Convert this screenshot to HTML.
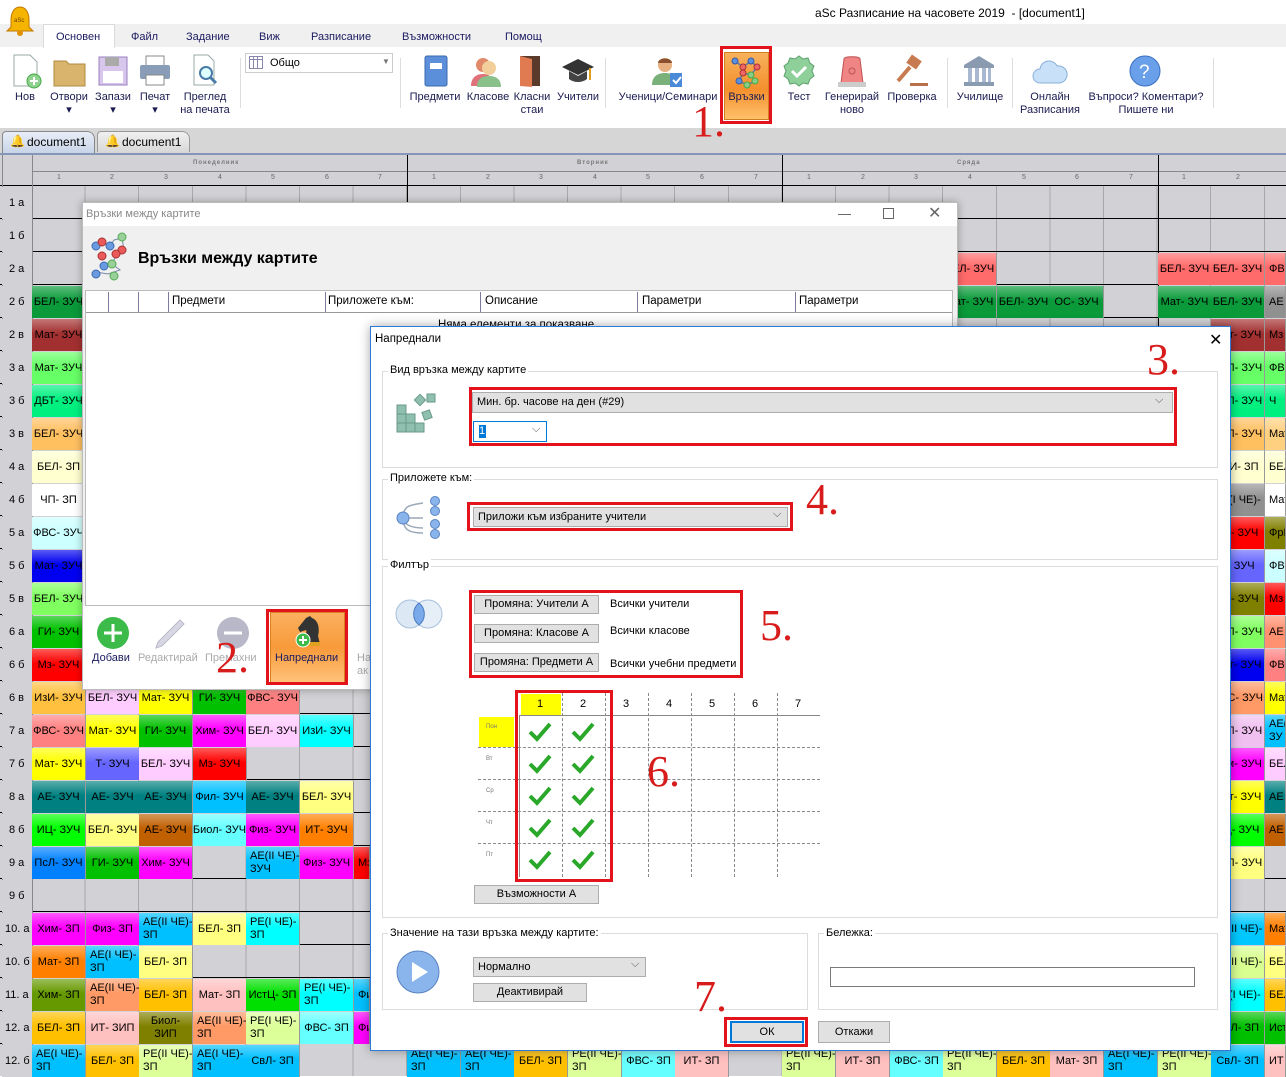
<!DOCTYPE html>
<html><head><meta charset="utf-8">
<style>
*{box-sizing:border-box;margin:0;padding:0}
body{width:1286px;height:1076px;position:relative;overflow:hidden;font-family:"Liberation Sans","Noto Sans CJK SC",sans-serif;font-size:11px;color:#000;background:#fff}
.a{position:absolute}
.rl{position:absolute;font-size:11px;color:#1a1a50;text-align:center}
.ri{position:absolute;top:53px;width:36px;height:36px}
.grid{position:absolute;left:0;top:153px;width:1286px;height:923px;background:#d2d2d6}
.c{position:absolute;width:54px;height:32px;display:flex;align-items:center;justify-content:center;font-size:11px;line-height:13px;text-align:center;background-image:linear-gradient(rgba(255,255,255,.35),rgba(255,255,255,0) 45%);border-right:1px solid #999;white-space:nowrap;overflow:hidden}
.c.l{justify-content:flex-start;padding-left:4px;text-align:left}
.lab{position:absolute;left:2px;width:30px;height:32px;font-size:11px;display:flex;align-items:center;padding-left:7px;background:#d2d2d6}
.btn{position:absolute;height:19px;background:#e1e1e1;border:1px solid #adadad;font-size:11px;text-align:center;line-height:17px}
.cb{position:absolute;height:21px;background:#e1e1e1;border:1px solid #adadad;font-size:11px;line-height:19px;padding-left:4px}
.grp{position:absolute;border:1px solid #dcdcdc}
.gt{position:absolute;background:#fff;font-size:11px;padding:0 2px}
.red{position:absolute;border:3px solid #e3131b}
.hn{position:absolute;font-family:"Liberation Serif",serif;font-size:44px;color:#d81c1c;line-height:1}
</style></head><body>

<!-- tab row -->
<div class="a" style="left:0;top:24px;width:1286px;height:23px;background:#f0f0f0"></div>
<div class="a" style="left:43px;top:24px;width:72px;height:24px;background:#fff;border:1px solid #dadada;border-bottom:none"></div>
<div class="a" style="left:56px;top:31px;font-size:11px;color:#1a1a60">Основен</div>
<div class="a" style="left:131px;top:31px;font-size:11px;color:#1a1a60">Файл</div>
<div class="a" style="left:186px;top:31px;font-size:11px;color:#1a1a60">Задание</div>
<div class="a" style="left:259px;top:31px;font-size:11px;color:#1a1a60">Виж</div>
<div class="a" style="left:311px;top:31px;font-size:11px;color:#1a1a60">Разписание</div>
<div class="a" style="left:402px;top:31px;font-size:11px;color:#1a1a60">Възможности</div>
<div class="a" style="left:505px;top:31px;font-size:11px;color:#1a1a60">Помощ</div>

<!-- title bar -->
<svg class="a" style="left:6px;top:5px" width="28" height="32" viewBox="0 0 28 32"><path d="M14 2c6 0 9 6 9 13v7l4 4H1l4-4v-7C5 8 8 2 14 2z" fill="#f5b400" stroke="#c07800"/><circle cx="14" cy="28" r="3" fill="#e09000"/><text x="8" y="17" font-size="6" fill="#704000" font-family="Liberation Sans">aSc</text></svg>
<div class="a" style="left:815px;top:6px;font-size:12px">aSc Разписание на часовете 2019&nbsp; - [document1]</div>

<!-- ribbon -->
<svg class="ri" style="left:10px"><path d="M4 2h16l7 7v24H4z" fill="#fff" stroke="#9aa"/><circle cx="24" cy="28" r="7" fill="#8fd18f" stroke="#4a4"/><path d="M24 24v8M20 28h8" stroke="#fff" stroke-width="2"/></svg>
<div class="rl" style="left:10px;top:91px;width:30px">Нов</div>
<svg class="ri" style="left:52px"><path d="M2 8h12l3 3h16v22H2z" fill="#d9b46c" stroke="#b08a40"/></svg>
<div class="rl" style="left:44px;top:91px;width:50px">Отвори<br>▾</div>
<svg class="ri" style="left:96px"><rect x="3" y="4" width="28" height="28" fill="#d8c6ec" stroke="#9a80c0"/><rect x="9" y="4" width="14" height="9" fill="#aaa"/><rect x="7" y="18" width="20" height="12" fill="#fff"/></svg>
<div class="rl" style="left:90px;top:91px;width:46px">Запази<br>▾</div>
<svg class="ri" style="left:138px"><rect x="8" y="3" width="18" height="10" fill="#fff" stroke="#888"/><rect x="2" y="12" width="30" height="14" rx="2" fill="#8a9db8"/><rect x="8" y="22" width="18" height="10" fill="#fff" stroke="#888"/></svg>
<div class="rl" style="left:135px;top:91px;width:40px">Печат<br>▾</div>
<svg class="ri" style="left:188px"><path d="M6 2h14l6 6v24H6z" fill="#fff" stroke="#9aa"/><circle cx="18" cy="20" r="6" fill="#dff" stroke="#4a7aa8" stroke-width="2"/><path d="M22 24l6 6" stroke="#4a7aa8" stroke-width="3"/></svg>
<div class="rl" style="left:175px;top:91px;width:60px;line-height:13px">Преглед<br>на печата</div>
<div class="a" style="left:240px;top:58px;width:1px;height:50px;background:#ddd"></div>
<div class="a" style="left:245px;top:53px;width:148px;height:20px;border:1px solid #ccc;background:#fff"></div>
<svg class="a" style="left:249px;top:56px" width="14" height="13"><rect x=".5" y=".5" width="13" height="12" fill="#fff" stroke="#88a"/><path d="M.5 3.5h13M4.5 1v12M8.5 1v12" stroke="#88a"/></svg>
<div class="a" style="left:270px;top:57px;font-size:11px">Общо</div>
<div class="a" style="left:382px;top:57px;font-size:8px;color:#777">▼</div>
<div class="a" style="left:400px;top:58px;width:1px;height:50px;background:#ddd"></div>
<svg class="ri" style="left:418px"><rect x="7" y="3" width="22" height="30" rx="2" fill="#5b8fd9" stroke="#3a6ab0"/><rect x="12" y="10" width="12" height="6" fill="#fff"/></svg>
<div class="rl" style="left:406px;top:91px;width:58px">Предмети</div>
<svg class="ri" style="left:469px"><circle cx="14" cy="12" r="7" fill="#e08a6a"/><path d="M2 33c0-8 5-12 12-12s10 4 10 12z" fill="#e0707a"/><circle cx="20" cy="15" r="7" fill="#f2cf9a"/><path d="M8 34c0-8 5-11 12-11s12 3 12 11z" fill="#8ac08a"/></svg>
<div class="rl" style="left:463px;top:91px;width:50px">Класове</div>
<svg class="ri" style="left:514px"><rect x="6" y="3" width="20" height="30" fill="#5a3a2a"/><path d="M6 3l12 3v28L6 33z" fill="#e07a50"/></svg>
<div class="rl" style="left:510px;top:91px;width:44px;line-height:13px">Класни<br>стаи</div>
<svg class="ri" style="left:560px"><path d="M2 14l16-8 16 8-16 8z" fill="#333"/><path d="M9 18v8c5 4 13 4 18 0v-8l-9 5z" fill="#444"/><path d="M30 15v12" stroke="#e0a020" stroke-width="2"/></svg>
<div class="rl" style="left:553px;top:91px;width:50px">Учители</div>
<div class="a" style="left:605px;top:58px;width:1px;height:50px;background:#ddd"></div>
<svg class="ri" style="left:650px"><circle cx="15" cy="12" r="7" fill="#e8b080"/><path d="M8 10c0-6 14-6 14 0" fill="#8a5030"/><path d="M2 32c0-8 5-12 13-12s11 4 11 12z" fill="#7ab07a"/><rect x="20" y="20" width="12" height="14" fill="#4a8ad8"/><path d="M23 27l3 3 5-6" stroke="#fff" fill="none" stroke-width="2"/></svg>
<div class="rl" style="left:614px;top:91px;width:108px">Ученици/Семинари</div>
<div class="a" style="left:724px;top:52px;width:45px;height:68px;background:linear-gradient(#f7b25b,#f58f2e 55%,#ffc06a);border:1px solid #d08020"></div>
<svg class="a" style="left:729px;top:55px" width="36" height="34"><path d="M6 6L14 12L22 6L28 12L22 20L14 18L10 26L18 30L26 26" stroke="#5a7aa8" stroke-width="1.5" fill="none"/><g fill="#5b8fe0" stroke="#3a5aa0"><circle cx="6" cy="6" r="3"/><circle cx="22" cy="6" r="3"/><circle cx="10" cy="26" r="3"/></g><g fill="#e66" stroke="#a33"><circle cx="14" cy="12" r="3"/><circle cx="28" cy="12" r="3"/><circle cx="14" cy="18" r="3"/></g><g fill="#8c8" stroke="#4a4"><circle cx="22" cy="20" r="3"/><circle cx="18" cy="30" r="3"/><circle cx="26" cy="26" r="3"/></g></svg>
<div class="rl" style="left:724px;top:91px;width:45px">Връзки</div>
<div class="red" style="left:720px;top:46px;width:52px;height:78px"></div>
<svg class="ri" style="left:781px"><path d="M18 3l4 3 5-1 2 5 4 3-2 5 2 5-4 3-2 5-5-1-4 3-4-3-5 1-2-5-4-3 2-5-2-5 4-3 2-5 5 1z" fill="#8fcf9a" stroke="#5aa06a"/><path d="M11 18l5 5 9-9" stroke="#fff" stroke-width="3" fill="none"/></svg>
<div class="rl" style="left:780px;top:91px;width:38px">Тест</div>
<svg class="ri" style="left:834px"><path d="M10 6c0-3 16-3 16 0l3 24H7z" fill="#ef8585" stroke="#c05050"/><rect x="4" y="29" width="28" height="5" fill="#ccc"/><circle cx="18" cy="18" r="3" fill="none" stroke="#c05050"/></svg>
<div class="rl" style="left:821px;top:91px;width:62px;line-height:13px">Генерирай<br>ново</div>
<svg class="ri" style="left:894px"><rect x="14" y="4" width="12" height="10" fill="#c87a50" transform="rotate(35 20 9)"/><path d="M16 14L4 28" stroke="#c87a50" stroke-width="4"/><rect x="16" y="30" width="18" height="3" fill="#b8704a"/></svg>
<div class="rl" style="left:884px;top:91px;width:56px">Проверка</div>
<div class="a" style="left:947px;top:58px;width:1px;height:50px;background:#ddd"></div>
<svg class="ri" style="left:961px"><path d="M3 12L18 3l15 9z" fill="#8a9ab0"/><rect x="3" y="12" width="30" height="3" fill="#8a9ab0"/><g fill="#a8b8d0"><rect x="7" y="15" width="4" height="14"/><rect x="14" y="15" width="4" height="14"/><rect x="21" y="15" width="4" height="14"/><rect x="27" y="15" width="3" height="14"/></g><rect x="3" y="29" width="30" height="4" fill="#8a9ab0"/></svg>
<div class="rl" style="left:950px;top:91px;width:60px">Училище</div>
<div class="a" style="left:1012px;top:58px;width:1px;height:50px;background:#ddd"></div>
<svg class="ri" style="left:1032px"><path d="M8 30a7 7 0 010-14 9 9 0 0117-3 8 8 0 013 17z" fill="#c8e0f8" stroke="#8ab0d8"/></svg>
<div class="rl" style="left:1012px;top:91px;width:76px;line-height:13px">Онлайн<br>Разписания</div>
<svg class="ri" style="left:1127px"><circle cx="18" cy="18" r="15" fill="#6aa0ea" stroke="#3a70c0"/><text x="12" y="25" font-size="19" fill="#fff" font-family="Liberation Sans">?</text></svg>
<div class="rl" style="left:1080px;top:91px;width:132px;line-height:13px">Въпроси? Коментари?<br>Пишете ни</div>
<div class="a" style="left:1213px;top:58px;width:1px;height:50px;background:#ddd"></div>

<!-- doc tabs -->
<div class="a" style="left:0;top:128px;width:1286px;height:25px;background:#d6d6d6"></div>
<div class="a" style="left:2px;top:131px;width:93px;height:22px;background:linear-gradient(#e8eef8,#c8d4e8);border:1px solid #888;border-bottom:none;border-radius:4px 8px 0 0"></div>
<div class="a" style="left:97px;top:131px;width:93px;height:21px;background:linear-gradient(#f0f0f0,#d8d8d8);border:1px solid #999;border-bottom:none;border-radius:4px 8px 0 0"></div>
<div class="a" style="left:10px;top:134px;font-size:12px">🔔</div>
<div class="a" style="left:27px;top:135px;font-size:12px">document1</div>
<div class="a" style="left:105px;top:134px;font-size:12px">🔔</div>
<div class="a" style="left:122px;top:135px;font-size:12px">document1</div>

<!-- grid -->
<div class="grid">
 <div class="a" style="left:0;top:0;width:1286px;height:2px;background:#8596b8"></div>
 <div class="a" style="left:32px;top:33px;width:1254px;height:890px;background-image:repeating-linear-gradient(90deg,transparent 0 52.6px,#a8a8a8 52.6px 53.6px)"></div>
 <div class="a" style="left:0;top:32px;width:1286px;height:891px;background-image:repeating-linear-gradient(180deg,#000 0 1px,transparent 1px 33px)"></div>
 <div class="a" style="left:32px;top:18px;width:1254px;height:1px;background:#888"></div>
 <div class="a" style="left:2px;top:2px;width:1px;height:921px;background:#888"></div>
 <div class="a" style="left:32px;top:2px;width:1px;height:921px;background:#888"></div>
 <div class="a" style="left:407px;top:2px;width:1px;height:921px;background:#000"></div>
 <div class="a" style="left:782px;top:2px;width:1px;height:921px;background:#000"></div>
 <div class="a" style="left:1158px;top:2px;width:1px;height:921px;background:#000"></div>
 <div class="a" style="left:193px;top:7px;font-size:6px;font-weight:bold;color:#777;letter-spacing:1px">Понеделник</div>
 <div class="a" style="left:577px;top:7px;font-size:6px;font-weight:bold;color:#777;letter-spacing:1px">Вторник</div>
 <div class="a" style="left:957px;top:7px;font-size:6px;font-weight:bold;color:#777;letter-spacing:1px">Сряда</div>
 <div class="a" style="left:32px;top:21px;width:1254px;font-size:7px;color:#666;white-space:nowrap">
  <span style="position:absolute;left:25px">1</span><span style="position:absolute;left:78px">2</span><span style="position:absolute;left:132px">3</span><span style="position:absolute;left:186px">4</span><span style="position:absolute;left:239px">5</span><span style="position:absolute;left:293px">6</span><span style="position:absolute;left:346px">7</span>
  <span style="position:absolute;left:400px">1</span><span style="position:absolute;left:454px">2</span><span style="position:absolute;left:507px">3</span><span style="position:absolute;left:561px">4</span><span style="position:absolute;left:614px">5</span><span style="position:absolute;left:668px">6</span><span style="position:absolute;left:722px">7</span>
  <span style="position:absolute;left:775px">1</span><span style="position:absolute;left:829px">2</span><span style="position:absolute;left:882px">3</span><span style="position:absolute;left:936px">4</span><span style="position:absolute;left:990px">5</span><span style="position:absolute;left:1043px">6</span><span style="position:absolute;left:1097px">7</span>
  <span style="position:absolute;left:1150px">1</span><span style="position:absolute;left:1204px">2</span>
 </div>
</div>

<!-- row labels -->
<div class="lab" style="top:187px">1 а</div><div class="lab" style="top:220px">1 б</div><div class="lab" style="top:253px">2 а</div><div class="lab" style="top:286px">2 б</div><div class="lab" style="top:319px">2 в</div><div class="lab" style="top:352px">3 а</div><div class="lab" style="top:385px">3 б</div><div class="lab" style="top:418px">3 в</div><div class="lab" style="top:451px">4 а</div><div class="lab" style="top:484px">4 б</div><div class="lab" style="top:517px">5 а</div><div class="lab" style="top:550px">5 б</div><div class="lab" style="top:583px">5 в</div><div class="lab" style="top:616px">6 а</div><div class="lab" style="top:649px">6 б</div><div class="lab" style="top:682px">6 в</div><div class="lab" style="top:715px">7 а</div><div class="lab" style="top:748px">7 б</div><div class="lab" style="top:781px">8 а</div><div class="lab" style="top:814px">8 б</div><div class="lab" style="top:847px">9 а</div><div class="lab" style="top:880px">9 б</div><div class="lab" style="top:913px;padding-left:3px">10. а</div><div class="lab" style="top:946px;padding-left:3px">10. б</div><div class="lab" style="top:979px;padding-left:3px">11. а</div><div class="lab" style="top:1012px;padding-left:3px">12. а</div><div class="lab" style="top:1045px;padding-left:3px">12. б</div>

<div class="c" style="left:32px;top:286px;background-color:#0a9a3a">БЕЛ- ЗУЧ</div>
<div class="c" style="left:32px;top:319px;background-color:#a33030">Мат- ЗУЧ</div>
<div class="c" style="left:32px;top:352px;background-color:#66ff66">Мат- ЗУЧ</div>
<div class="c" style="left:32px;top:385px;background-color:#00f080">ДБТ- ЗУЧ</div>
<div class="c" style="left:32px;top:418px;background-color:#ffc060">БЕЛ- ЗУЧ</div>
<div class="c" style="left:32px;top:451px;background-color:#ffffd0">БЕЛ- ЗП</div>
<div class="c" style="left:32px;top:484px;background-color:#ffffff">ЧП- ЗП</div>
<div class="c" style="left:32px;top:517px;background-color:#ccffff">ФВС- ЗУЧ</div>
<div class="c" style="left:32px;top:550px;background-color:#0000f0">Мат- ЗУЧ</div>
<div class="c" style="left:32px;top:583px;background-color:#80ff60">БЕЛ- ЗУЧ</div>
<div class="c" style="left:32px;top:616px;background-color:#00c000">ГИ- ЗУЧ</div>
<div class="c" style="left:32px;top:649px;background-color:#ff0000">Мз- ЗУЧ</div>

<div class="c" style="left:32px;top:682px;background-color:#ffc040">ИзИ- ЗУЧ</div>
<div class="c" style="left:86px;top:682px;background-color:#ffccff">БЕЛ- ЗУЧ</div>
<div class="c" style="left:139px;top:682px;background-color:#ffff00">Мат- ЗУЧ</div>
<div class="c" style="left:193px;top:682px;background-color:#00c000">ГИ- ЗУЧ</div>
<div class="c" style="left:246px;top:682px;background-color:#ff8080">ФВС- ЗУЧ</div>
<div class="c" style="left:32px;top:715px;background-color:#ff8080">ФВС- ЗУЧ</div>
<div class="c" style="left:86px;top:715px;background-color:#ffff00">Мат- ЗУЧ</div>
<div class="c" style="left:139px;top:715px;background-color:#00c000">ГИ- ЗУЧ</div>
<div class="c" style="left:193px;top:715px;background-color:#ff00ff">Хим- ЗУЧ</div>
<div class="c" style="left:246px;top:715px;background-color:#ffccff">БЕЛ- ЗУЧ</div>
<div class="c" style="left:300px;top:715px;background-color:#00ffff">ИзИ- ЗУЧ</div>
<div class="c" style="left:32px;top:748px;background-color:#ffff00">Мат- ЗУЧ</div>
<div class="c" style="left:86px;top:748px;background-color:#6666ff">Т- ЗУЧ</div>
<div class="c" style="left:139px;top:748px;background-color:#ffccff">БЕЛ- ЗУЧ</div>
<div class="c" style="left:193px;top:748px;background-color:#ff0000">Мз- ЗУЧ</div>
<div class="c" style="left:32px;top:781px;background-color:#008080">АЕ- ЗУЧ</div>
<div class="c" style="left:86px;top:781px;background-color:#008080">АЕ- ЗУЧ</div>
<div class="c" style="left:139px;top:781px;background-color:#008080">АЕ- ЗУЧ</div>
<div class="c" style="left:193px;top:781px;background-color:#00c0ff">Фил- ЗУЧ</div>
<div class="c" style="left:246px;top:781px;background-color:#008080">АЕ- ЗУЧ</div>
<div class="c" style="left:300px;top:781px;background-color:#ffff80">БЕЛ- ЗУЧ</div>
<div class="c" style="left:32px;top:814px;background-color:#00ff00">ИЦ- ЗУЧ</div>
<div class="c" style="left:86px;top:814px;background-color:#ffff80">БЕЛ- ЗУЧ</div>
<div class="c" style="left:139px;top:814px;background-color:#c06000">АЕ- ЗУЧ</div>
<div class="c" style="left:193px;top:814px;background-color:#66ffff">Биол- ЗУЧ</div>
<div class="c" style="left:246px;top:814px;background-color:#ff00ff">Физ- ЗУЧ</div>
<div class="c" style="left:300px;top:814px;background-color:#ff8000">ИТ- ЗУЧ</div>
<div class="c" style="left:32px;top:847px;background-color:#0080ff">ПсЛ- ЗУЧ</div>
<div class="c" style="left:86px;top:847px;background-color:#00c000">ГИ- ЗУЧ</div>
<div class="c" style="left:139px;top:847px;background-color:#ff00ff">Хим- ЗУЧ</div>
<div class="c l" style="left:246px;top:847px;background-color:#00c0ff">АЕ(II ЧЕ)-<br>ЗУЧ</div>
<div class="c" style="left:300px;top:847px;background-color:#ff00ff">Физ- ЗУЧ</div>
<div class="c l" style="left:354px;top:847px;width:16px;background-color:#ff0000">Мз</div>
<div class="c" style="left:32px;top:913px;background-color:#ff00ff">Хим- ЗП</div>
<div class="c" style="left:86px;top:913px;background-color:#ff00ff">Физ- ЗП</div>
<div class="c l" style="left:139px;top:913px;background-color:#00c0ff">АЕ(II ЧЕ)-<br>ЗП</div>
<div class="c" style="left:193px;top:913px;background-color:#ffff80">БЕЛ- ЗП</div>
<div class="c l" style="left:246px;top:913px;background-color:#00ffff">РЕ(I ЧЕ)-<br>ЗП</div>
<div class="c" style="left:32px;top:946px;background-color:#ff8000">Мат- ЗП</div>
<div class="c l" style="left:86px;top:946px;background-color:#00c0ff">АЕ(I ЧЕ)-<br>ЗП</div>
<div class="c" style="left:139px;top:946px;background-color:#ffff80">БЕЛ- ЗП</div>
<div class="c" style="left:32px;top:979px;background-color:#669900">Хим- ЗП</div>
<div class="c l" style="left:86px;top:979px;background-color:#ff9966">АЕ(II ЧЕ)-<br>ЗП</div>
<div class="c" style="left:139px;top:979px;background-color:#ffc000">БЕЛ- ЗП</div>
<div class="c" style="left:193px;top:979px;background-color:#ffc0c0">Мат- ЗП</div>
<div class="c" style="left:246px;top:979px;background-color:#00e000">ИстЦ- ЗП</div>
<div class="c l" style="left:300px;top:979px;background-color:#00ffff">РЕ(I ЧЕ)-<br>ЗП</div>
<div class="c l" style="left:354px;top:979px;width:16px;background-color:#00c0ff">Фи</div>
<div class="c" style="left:32px;top:1012px;background-color:#ffc000">БЕЛ- ЗП</div>
<div class="c" style="left:86px;top:1012px;background-color:#ffc0c0">ИТ- ЗИП</div>
<div class="c" style="left:139px;top:1012px;background-color:#808000">Биол-<br>ЗИП</div>
<div class="c l" style="left:193px;top:1012px;background-color:#ff9966">АЕ(II ЧЕ)-<br>ЗП</div>
<div class="c l" style="left:246px;top:1012px;background-color:#ddff99">РЕ(I ЧЕ)-<br>ЗП</div>
<div class="c" style="left:300px;top:1012px;background-color:#66ffff">ФВС- ЗП</div>
<div class="c l" style="left:354px;top:1012px;width:16px;background-color:#ff00ff">Фи</div>
<div class="c l" style="left:32px;top:1045px;background-color:#00c0ff">АЕ(I ЧЕ)-<br>ЗП</div>
<div class="c" style="left:86px;top:1045px;background-color:#ffc000">БЕЛ- ЗП</div>
<div class="c l" style="left:139px;top:1045px;background-color:#ddff99">РЕ(II ЧЕ)-<br>ЗП</div>
<div class="c l" style="left:193px;top:1045px;background-color:#00c0ff">АЕ(I ЧЕ)-<br>ЗП</div>
<div class="c" style="left:246px;top:1045px;background-color:#00c0ff">СвЛ- ЗП</div>
<div class="c l" style="left:407px;top:1045px;background-color:#00c0ff">АЕ(I ЧЕ)-<br>ЗП</div>
<div class="c l" style="left:461px;top:1045px;background-color:#00c0ff">АЕ(I ЧЕ)-<br>ЗП</div>
<div class="c" style="left:514px;top:1045px;background-color:#ffc000">БЕЛ- ЗП</div>
<div class="c l" style="left:568px;top:1045px;background-color:#ddff99">РЕ(II ЧЕ)-<br>ЗП</div>
<div class="c" style="left:622px;top:1045px;background-color:#66ffff">ФВС- ЗП</div>
<div class="c" style="left:675px;top:1045px;background-color:#ffc0c0">ИТ- ЗП</div>
<div class="c l" style="left:782px;top:1045px;background-color:#ddff99">РЕ(II ЧЕ)-<br>ЗП</div>
<div class="c" style="left:836px;top:1045px;background-color:#ffc0c0">ИТ- ЗП</div>
<div class="c" style="left:890px;top:1045px;background-color:#66ffff">ФВС- ЗП</div>
<div class="c l" style="left:943px;top:1045px;background-color:#ddff99">РЕ(II ЧЕ)-<br>ЗП</div>
<div class="c" style="left:997px;top:1045px;background-color:#ffc000">БЕЛ- ЗП</div>
<div class="c" style="left:1050px;top:1045px;background-color:#ffc0c0">Мат- ЗП</div>
<div class="c l" style="left:1104px;top:1045px;background-color:#00c0ff">АЕ(I ЧЕ)-<br>ЗП</div>
<div class="c l" style="left:1158px;top:1045px;background-color:#ddff99">РЕ(II ЧЕ)-<br>ЗП</div>
<div class="c" style="left:1211px;top:1045px;background-color:#00c0ff">СвЛ- ЗП</div>
<div class="c l" style="left:1265px;top:1045px;width:21px;background-color:#ffc0c0">ИТ</div>

<div class="c" style="left:943px;top:253px;background-color:#ff6a6a">БЕЛ- ЗУЧ</div>
<div class="c" style="left:1158px;top:253px;background-color:#ff6a6a">БЕЛ- ЗУЧ</div>
<div class="c" style="left:1211px;top:253px;background-color:#ff6a6a">БЕЛ- ЗУЧ</div>
<div class="c l" style="left:1265px;top:253px;width:21px;background-color:#ff6a6a">ФВС</div>
<div class="c" style="left:943px;top:286px;background-color:#0a9a3a">Мат- ЗУЧ</div>
<div class="c" style="left:997px;top:286px;background-color:#0a9a3a">БЕЛ- ЗУЧ</div>
<div class="c" style="left:1050px;top:286px;background-color:#0a9a3a">ОС- ЗУЧ</div>
<div class="c" style="left:1158px;top:286px;background-color:#0a9a3a">Мат- ЗУЧ</div>
<div class="c" style="left:1211px;top:286px;background-color:#0a9a3a">БЕЛ- ЗУЧ</div>
<div class="c l" style="left:1265px;top:286px;width:21px;background-color:#909090">АЕ</div>
<div class="c" style="left:1211px;top:319px;background-color:#a33030">Мат- ЗУЧ</div><div class="c l" style="left:1265px;top:319px;width:21px;background-color:#a33030">Мз</div>
<div class="c" style="left:1211px;top:352px;background-color:#66ff66">БЕЛ- ЗУЧ</div><div class="c l" style="left:1265px;top:352px;width:21px;background-color:#66ff66">ФВС</div>
<div class="c" style="left:1211px;top:385px;background-color:#00f080">БЕЛ- ЗУЧ</div><div class="c l" style="left:1265px;top:385px;width:21px;background-color:#00f080">Ч</div>
<div class="c" style="left:1211px;top:418px;background-color:#ffc060">БЕЛ- ЗУЧ</div><div class="c l" style="left:1265px;top:418px;width:21px;background-color:#ffd080">Мат</div>
<div class="c" style="left:1211px;top:451px;background-color:#ffffd0">ИзИ- ЗП</div><div class="c l" style="left:1265px;top:451px;width:21px;background-color:#ffffd0">БЕЛ</div>
<div class="c" style="left:1211px;top:484px;background-color:#909090">АЕ(I ЧЕ)-</div><div class="c l" style="left:1265px;top:484px;width:21px;background-color:#fff">Мат</div>
<div class="c" style="left:1211px;top:517px;background-color:#ff0000">Мз- ЗУЧ</div><div class="c l" style="left:1265px;top:517px;width:21px;background-color:#808000">ФрЕ</div>
<div class="c" style="left:1211px;top:550px;background-color:#6666ff">Т- ЗУЧ</div><div class="c l" style="left:1265px;top:550px;width:21px;background-color:#ccffff">ФВС</div>
<div class="c" style="left:1211px;top:583px;background-color:#808000">АЕ- ЗУЧ</div><div class="c l" style="left:1265px;top:583px;width:21px;background-color:#ff0000">Мз</div>
<div class="c" style="left:1211px;top:616px;background-color:#80ff60">БЕЛ- ЗУЧ</div><div class="c l" style="left:1265px;top:616px;width:21px;background-color:#ff9070">АЕ</div>
<div class="c" style="left:1211px;top:649px;background-color:#0000f0">Мат- ЗУЧ</div><div class="c l" style="left:1265px;top:649px;width:21px;background-color:#ff8080">ФВС</div>
<div class="c" style="left:1211px;top:682px;background-color:#ff9966">ФВС- ЗУЧ</div><div class="c l" style="left:1265px;top:682px;width:21px;background-color:#ffff00">Мат</div>
<div class="c" style="left:1211px;top:715px;background-color:#f0c0f0">БЕЛ- ЗУЧ</div><div class="c l" style="left:1265px;top:715px;width:21px;background-color:#00c0ff">АЕ(<br>ЗУ</div>
<div class="c" style="left:1211px;top:748px;background-color:#ff00ff">Хим- ЗУЧ</div><div class="c l" style="left:1265px;top:748px;width:21px;background-color:#ffccff">БЕЛ</div>
<div class="c" style="left:1211px;top:781px;background-color:#ffff00">Мат- ЗУЧ</div><div class="c l" style="left:1265px;top:781px;width:21px;background-color:#008080">АЕ</div>
<div class="c" style="left:1211px;top:814px;background-color:#00ff00">ИЦ- ЗУЧ</div><div class="c l" style="left:1265px;top:814px;width:21px;background-color:#c06000">АЕ</div>
<div class="c" style="left:1211px;top:847px;background-color:#ffff80">БЕЛ- ЗУЧ</div>
<div class="c" style="left:1211px;top:913px;background-color:#00c8ff">АЕ(II ЧЕ)-</div><div class="c l" style="left:1265px;top:913px;width:21px;background-color:#ff8000">Мат</div>
<div class="c" style="left:1211px;top:946px;background-color:#d8ff90">РЕ(II ЧЕ)-</div><div class="c l" style="left:1265px;top:946px;width:21px;background-color:#ffff80">БЕЛ</div>
<div class="c" style="left:1211px;top:979px;background-color:#00ffff">РЕ(I ЧЕ)-</div><div class="c l" style="left:1265px;top:979px;width:21px;background-color:#ffc000">БЕЛ</div>
<div class="c" style="left:1211px;top:1012px;background-color:#00c000">БЕЛ- ЗП</div><div class="c l" style="left:1265px;top:1012px;width:21px;background-color:#00c000">Ист</div>

<!-- Dialog 1 -->
<div class="a" style="left:82px;top:202px;width:876px;height:488px;background:#fff;border:1px solid #bbb;box-shadow:0 0 8px rgba(0,0,0,.3)"></div>
<div class="a" style="left:86px;top:208px;font-size:11px;color:#888">Връзки между картите</div>
<div class="a" style="left:838px;top:206px;font-size:13px;color:#555">—</div>
<div class="a" style="left:883px;top:208px;width:11px;height:11px;border:1px solid #666"></div>
<div class="a" style="left:928px;top:203px;font-size:16px;color:#666">✕</div>
<div class="a" style="left:83px;top:226px;width:874px;height:380px;background:#f0f0f0"></div>
<svg class="a" style="left:86px;top:230px" width="48" height="52"><path d="M10 16L16 12L24 16L28 10L36 8L38 20L30 26L26 34L34 40L22 44L10 42" stroke="#7a8aa8" fill="none"/><g fill="#6a9ae0" stroke="#3a6ab0"><circle cx="10" cy="16" r="4"/><circle cx="24" cy="16" r="4"/><circle cx="18" cy="36" r="4"/><circle cx="10" cy="44" r="4"/></g><g fill="#ea5a5a" stroke="#a33"><circle cx="16" cy="12" r="4"/><circle cx="36" cy="20" r="4"/><circle cx="16" cy="26" r="4"/><circle cx="30" cy="24" r="4"/></g><g fill="#9ad09a" stroke="#5a5"><circle cx="36" cy="7" r="4"/><circle cx="26" cy="34" r="4"/><circle cx="28" cy="46" r="4"/></g></svg>
<div class="a" style="left:138px;top:250px;font-size:16px;font-weight:bold">Връзки между картите</div>
<div class="a" style="left:85px;top:290px;width:868px;height:316px;background:#fff;border:1px solid #bbb"></div>
<div class="a" style="left:86px;top:291px;width:866px;height:22px;border-bottom:1px solid #999;background:#fff"></div>
<div class="a" style="left:108px;top:292px;width:1px;height:20px;background:#7a7aa0"></div>
<div class="a" style="left:138px;top:292px;width:1px;height:20px;background:#7a7aa0"></div>
<div class="a" style="left:168px;top:292px;width:1px;height:20px;background:#7a7aa0"></div>
<div class="a" style="left:325px;top:292px;width:1px;height:20px;background:#7a7aa0"></div>
<div class="a" style="left:480px;top:292px;width:1px;height:20px;background:#7a7aa0"></div>
<div class="a" style="left:637px;top:292px;width:1px;height:20px;background:#7a7aa0"></div>
<div class="a" style="left:795px;top:292px;width:1px;height:20px;background:#7a7aa0"></div>
<div class="a" style="left:172px;top:295px;font-size:11.5px">Предмети</div>
<div class="a" style="left:328px;top:295px;font-size:11.5px">Приложете към:</div>
<div class="a" style="left:485px;top:295px;font-size:11.5px">Описание</div>
<div class="a" style="left:642px;top:295px;font-size:11.5px">Параметри</div>
<div class="a" style="left:799px;top:295px;font-size:11.5px">Параметри</div>
<div class="a" style="left:438px;top:319px;font-size:11.5px">Няма елементи за показване</div>
<div class="a" style="left:83px;top:606px;width:874px;height:83px;background:#fff"></div>
<svg class="a" style="left:96px;top:616px" width="34" height="34"><circle cx="17" cy="17" r="16" fill="#3cba4a"/><path d="M17 8v18M8 17h18" stroke="#fff" stroke-width="3"/></svg>
<div class="a" style="left:92px;top:652px;font-size:11px;color:#1a1a60">Добави</div>
<svg class="a" style="left:152px;top:616px" width="34" height="34"><path d="M28 4l4 4L10 30l-6 2 2-6z" fill="#d8d8e4" stroke="#b8b8c8"/></svg>
<div class="a" style="left:138px;top:652px;font-size:11px;color:#aaa">Редактирай</div>
<svg class="a" style="left:216px;top:616px" width="34" height="34"><circle cx="17" cy="17" r="16" fill="#b8b8c8"/><path d="M8 17h18" stroke="#fff" stroke-width="3"/></svg>
<div class="a" style="left:205px;top:652px;font-size:11px;color:#aaa">Премахни</div>
<div class="a" style="left:270px;top:612px;width:75px;height:71px;background:linear-gradient(#fbb060,#f89a3a 50%,#ffc27a);border:1px solid #d88020"></div>
<svg class="a" style="left:294px;top:614px" width="30" height="34"><path d="M8 30c0-8 6-10 4-14l-6 2-2-4 8-10 4-2 2 2c6 2 8 10 6 18l2 8z" fill="#333"/><rect x="6" y="28" width="20" height="4" fill="#e0a020"/><circle cx="9" cy="26" r="7" fill="#3cba4a" stroke="#fff"/><path d="M9 22v8M5 26h8" stroke="#fff" stroke-width="2"/></svg>
<div class="a" style="left:275px;top:652px;font-size:11px;color:#1a1a60">Напреднали</div>
<div class="red" style="left:266px;top:609px;width:82px;height:76px"></div>
<div class="a" style="left:357px;top:652px;font-size:11px;color:#aaa;line-height:13px">На<br>ак</div>
<div class="hn" style="left:216px;top:636px">2.</div>

<!-- Dialog 2 -->
<div class="a" style="left:370px;top:326px;width:861px;height:725px;background:#fff;border:1px solid #2b79d8;box-shadow:0 0 10px rgba(0,0,0,.35)"></div>
<div class="a" style="left:375px;top:333px;font-size:11.5px">Напреднали</div>
<div class="a" style="left:1209px;top:330px;font-size:16px">✕</div>
<div class="grp" style="left:382px;top:371px;width:836px;height:97px"></div>
<div class="gt" style="left:388px;top:364px">Вид връзка между картите</div>
<svg class="a" style="left:396px;top:391px" width="46" height="46"><g fill="#8fbfaf" stroke="#6a9a8a"><rect x="1" y="14" width="9" height="9"/><rect x="1" y="23" width="9" height="9"/><rect x="10" y="23" width="9" height="9"/><rect x="1" y="32" width="9" height="9"/><rect x="10" y="32" width="9" height="9"/><rect x="19" y="32" width="9" height="9"/><rect x="31" y="3" width="8" height="8"/><rect x="20" y="5" width="8" height="8" transform="rotate(45 24 9)"/><rect x="27" y="20" width="8" height="8" transform="rotate(-20 31 24)"/></g></svg>
<div class="cb" style="left:472px;top:392px;width:701px">Мин. бр. часове на ден (#29)</div>
<div class="a" style="left:1155px;top:394px;font-size:11px;color:#555">⌵</div>
<div class="a" style="left:473px;top:421px;width:74px;height:21px;border:1px solid #0078d7;background:#fff"></div>
<div class="a" style="left:479px;top:425px;width:7px;height:13px;background:#0078d7;color:#fff;font-size:11px;line-height:13px">1</div>
<div class="a" style="left:532px;top:423px;font-size:11px;color:#555">⌵</div>
<div class="red" style="left:469px;top:387px;width:708px;height:59px"></div>
<div class="hn" style="left:1147px;top:338px">3.</div>

<div class="grp" style="left:382px;top:479px;width:836px;height:81px"></div>
<div class="gt" style="left:388px;top:472px">Приложете към:</div>
<svg class="a" style="left:395px;top:495px" width="48" height="46"><path d="M8 23C8 10 16 10 28 8M8 23h20M8 23c0 6 8 10 20 10M8 23c0 13 8 15 20 15" stroke="#9aa8b8" fill="none" stroke-width="1.5"/><g fill="#8ab4ec" stroke="#5a84c0"><circle cx="8" cy="23" r="6"/><circle cx="40" cy="6" r="4.5"/><circle cx="40" cy="16" r="4.5"/><circle cx="40" cy="29" r="4.5"/><circle cx="40" cy="39" r="4.5"/></g></svg>
<div class="cb" style="left:473px;top:507px;width:315px;height:20px;line-height:18px">Приложи към избраните учители</div>
<div class="a" style="left:773px;top:508px;font-size:11px;color:#555">⌵</div>
<div class="red" style="left:467px;top:502px;width:326px;height:29px"></div>
<div class="hn" style="left:806px;top:478px">4.</div>

<div class="grp" style="left:382px;top:566px;width:836px;height:352px"></div>
<div class="gt" style="left:388px;top:559px">Филтър</div>
<svg class="a" style="left:394px;top:597px" width="52" height="34"><circle cx="16" cy="17" r="14" fill="#dce8f4" stroke="#a8c0dc"/><circle cx="34" cy="17" r="14" fill="#dce8f4" stroke="#a8c0dc" fill-opacity=".7"/><path d="M25 6a14 14 0 010 22a14 14 0 010-22z" fill="#7aaaea" stroke="#4a7ac0"/></svg>
<div class="btn" style="left:474px;top:595px;width:125px">Промяна: Учители А</div>
<div class="btn" style="left:474px;top:624px;width:125px">Промяна: Класове А</div>
<div class="btn" style="left:474px;top:653px;width:125px">Промяна: Предмети А</div>
<div class="a" style="left:610px;top:598px;font-size:11px">Всички учители</div>
<div class="a" style="left:610px;top:625px;font-size:11px">Всички класове</div>
<div class="a" style="left:610px;top:658px;font-size:11px">Всички учебни предмети</div>
<div class="red" style="left:469px;top:590px;width:274px;height:88px"></div>
<div class="hn" style="left:760px;top:604px">5.</div>

<div class="a" style="left:521px;top:694px;width:40px;height:21px;background:#ffff00"></div>
<div class="a" style="left:479px;top:717px;width:35px;height:30px;background:#ffff00"></div>
<div class="a" style="left:519px;top:715px;width:301px;height:1px;background:#888"></div>
<div class="a" style="left:519px;top:715px;width:1px;height:162px;background:#888"></div>
<div class="a" style="left:562px;top:693px;width:0;height:184px;border-left:1px dashed #888"></div>
<div class="a" style="left:605px;top:693px;width:0;height:184px;border-left:1px dashed #888"></div>
<div class="a" style="left:648px;top:693px;width:0;height:184px;border-left:1px dashed #888"></div>
<div class="a" style="left:691px;top:693px;width:0;height:184px;border-left:1px dashed #888"></div>
<div class="a" style="left:734px;top:693px;width:0;height:184px;border-left:1px dashed #888"></div>
<div class="a" style="left:777px;top:693px;width:0;height:184px;border-left:1px dashed #888"></div>
<div class="a" style="left:478px;top:747px;width:342px;height:0;border-top:1px dashed #888"></div>
<div class="a" style="left:478px;top:779px;width:342px;height:0;border-top:1px dashed #888"></div>
<div class="a" style="left:478px;top:811px;width:342px;height:0;border-top:1px dashed #888"></div>
<div class="a" style="left:478px;top:843px;width:342px;height:0;border-top:1px dashed #888"></div>
<div class="a" style="left:537px;top:698px;font-size:11px">1</div>
<div class="a" style="left:580px;top:698px;font-size:11px">2</div>
<div class="a" style="left:623px;top:698px;font-size:11px">3</div>
<div class="a" style="left:666px;top:698px;font-size:11px">4</div>
<div class="a" style="left:709px;top:698px;font-size:11px">5</div>
<div class="a" style="left:752px;top:698px;font-size:11px">6</div>
<div class="a" style="left:795px;top:698px;font-size:11px">7</div>
<div class="a" style="left:486px;top:724px;font-size:6px;color:#777">Пон</div>
<div class="a" style="left:486px;top:756px;font-size:6px;color:#777">Вт</div>
<div class="a" style="left:486px;top:788px;font-size:6px;color:#777">Ср</div>
<div class="a" style="left:486px;top:820px;font-size:6px;color:#777">Чт</div>
<div class="a" style="left:486px;top:852px;font-size:6px;color:#777">Пт</div>
<svg class="a" style="left:528px;top:720px" width="70" height="152"><defs><path id="k" d="M0 10l7 7L20 2" stroke="#2aa82a" stroke-width="4" fill="none"/></defs>
<use href="#k" x="2" y="2"/><use href="#k" x="45" y="2"/><use href="#k" x="2" y="34"/><use href="#k" x="45" y="34"/><use href="#k" x="2" y="66"/><use href="#k" x="45" y="66"/><use href="#k" x="2" y="98"/><use href="#k" x="45" y="98"/><use href="#k" x="2" y="130"/><use href="#k" x="45" y="130"/></svg>
<div class="red" style="left:515px;top:690px;width:98px;height:192px"></div>
<div class="hn" style="left:647px;top:750px">6.</div>
<div class="btn" style="left:474px;top:885px;width:125px">Възможности А</div>

<div class="grp" style="left:382px;top:933px;width:426px;height:77px"></div>
<div class="gt" style="left:388px;top:927px">Значение на тази връзка между картите:</div>
<svg class="a" style="left:396px;top:950px" width="46" height="44"><circle cx="22" cy="22" r="21" fill="#8ab4ec" stroke="#5a84c0"/><path d="M16 12v20l16-10z" fill="#fff"/></svg>
<div class="cb" style="left:473px;top:957px;width:173px;height:20px;line-height:18px">Нормално</div>
<div class="a" style="left:631px;top:958px;font-size:11px;color:#555">⌵</div>
<div class="btn" style="left:473px;top:983px;width:114px">Деактивирай</div>
<div class="grp" style="left:818px;top:933px;width:400px;height:77px"></div>
<div class="gt" style="left:824px;top:927px">Бележка:</div>
<div class="a" style="left:830px;top:967px;width:365px;height:20px;border:1px solid #7a7a7a"></div>
<div class="btn" style="left:730px;top:1021px;width:74px;height:22px;border:2px solid #0078d7;line-height:18px">ОК</div>
<div class="red" style="left:724px;top:1017px;width:84px;height:30px"></div>
<div class="btn" style="left:818px;top:1021px;width:72px;height:22px;line-height:20px">Откажи</div>
<div class="hn" style="left:694px;top:975px">7.</div>
<div class="hn" style="left:692px;top:100px">1.</div>
</body></html>
